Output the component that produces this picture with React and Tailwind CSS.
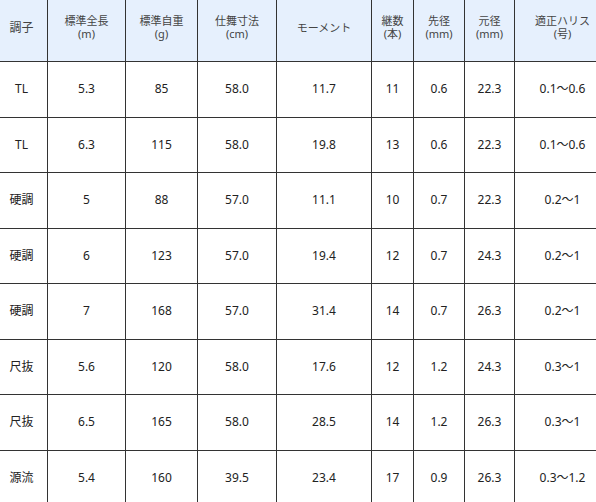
import React from "react";

const header = [
  ["調子"],
  ["標準全長", "(m)"],
  ["標準自重", "(g)"],
  ["仕舞寸法", "(cm)"],
  ["モーメント"],
  ["継数", "(本)"],
  ["先径", "(mm)"],
  ["元径", "(mm)"],
  ["適正ハリス", "(号)"],
];

const rows = [
  ["TL", "5.3", "85", "58.0", "11.7", "11", "0.6", "22.3", "0.1〜0.6"],
  ["TL", "6.3", "115", "58.0", "19.8", "13", "0.6", "22.3", "0.1〜0.6"],
  ["硬調", "5", "88", "57.0", "11.1", "10", "0.7", "22.3", "0.2〜1"],
  ["硬調", "6", "123", "57.0", "19.4", "12", "0.7", "24.3", "0.2〜1"],
  ["硬調", "7", "168", "57.0", "31.4", "14", "0.7", "26.3", "0.2〜1"],
  ["尺抜", "5.6", "120", "58.0", "17.6", "12", "1.2", "24.3", "0.3〜1"],
  ["尺抜", "6.5", "165", "58.0", "28.5", "14", "1.2", "26.3", "0.3〜1"],
  ["源流", "5.4", "160", "39.5", "23.4", "17", "0.9", "26.3", "0.3〜1.2"],
];

export default function App() {
  return (
    <div
      className="w-[596px] h-[502px] overflow-hidden bg-white"
      style={{ fontFamily: '"Noto Sans", "Noto Sans CJK JP", sans-serif' }}
    >
      <div className="grid w-[611px] grid-cols-[48px_78px_72px_79px_95px_42px_51px_50px_96px] auto-rows-[55.5px] grid-rows-[62px]">
        {header.map((h, i) => (
          <div
            key={"h" + i}
            className={
              "flex flex-col items-center justify-center border-r border-b border-[#333] bg-[#e6f0fd] pb-[7px] text-[11px] leading-[13px] text-[#444] " +
              (i === 0 ? "pr-1 text-[12px] text-[#222]" : "")
            }
          >
            {h.map((t, j) => (
              <span key={j}>{t}</span>
            ))}
          </div>
        ))}
        {rows.map((r, ri) =>
          r.map((c, ci) => (
            <div
              key={ri + "-" + ci}
              className={
                "flex items-center justify-center border-r border-b border-[#333] text-[12px] text-[#222] " +
                (ci === 0 ? "pr-1" : "")
              }
            >
              {c}
            </div>
          ))
        )}
      </div>
    </div>
  );
}
